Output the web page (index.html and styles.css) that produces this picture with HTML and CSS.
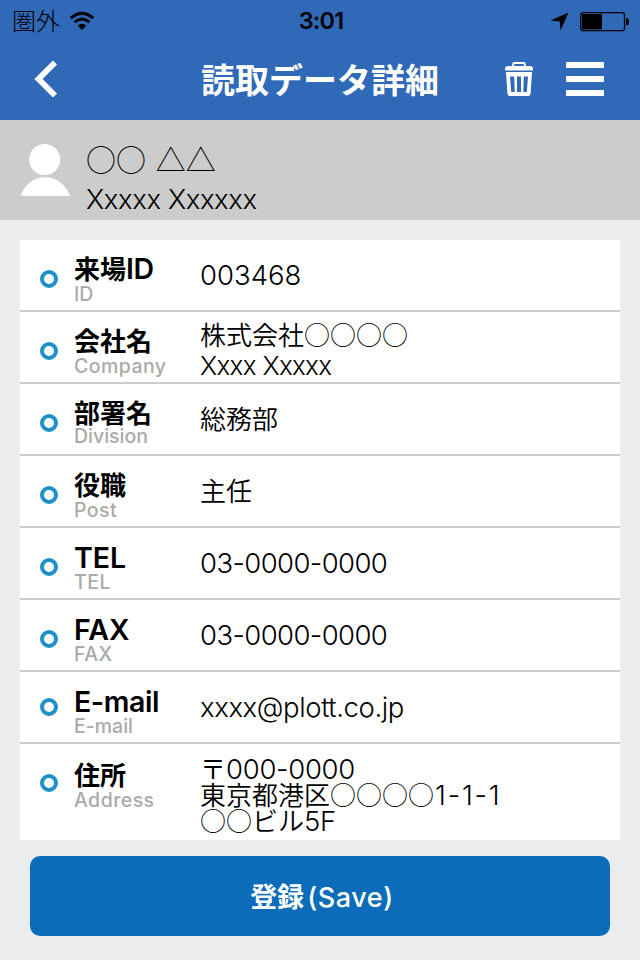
FILE: index.html
```html
<!DOCTYPE html>
<html lang="ja">
<head>
    <meta charset="UTF-8">
    <meta name="viewport" content="width=device-width, initial-scale=1.0">
    <title>読取データ詳細</title>
    <link rel="stylesheet" href="styles.css">
</head>
<body>
    <header class="header">
        <div class="status-bar">
            <div class="status-left">
                <span class="carrier">圏外</span>
                <svg class="wifi" width="26" height="20" viewBox="0 0 26 20">
                    <path d="M1.8 7.2Q13 -2.4 24.2 7.2" fill="none" stroke="#000" stroke-width="3"/>
                    <path d="M5.6 11.2Q13 4.8 20.4 11.2" fill="none" stroke="#000" stroke-width="3"/>
                    <path d="M8.7 14.5Q13 10.9 17.3 14.5L13 19z"/>
                </svg>
            </div>
            <span class="time">3:01</span>
            <div class="status-right">
                <svg width="19" height="19" viewBox="0 0 19 19">
                    <path d="M0.5 8.5L18.5 0.5L10.5 18.5L9.8 9.4z"/>
                </svg>
                <svg class="battery" width="50" height="20" viewBox="0 0 50 20">
                    <rect x="0.7" y="0.7" width="43.8" height="18" rx="2.5" fill="none" stroke="#000" stroke-width="1.3"/>
                    <rect x="2" y="2" width="20" height="15.3"/>
                    <path d="M46 6h1.5q1.5 1.5 1.5 3.7t-1.5 3.5H46z"/>
                </svg>
            </div>
        </div>
        <div class="nav-bar">
            <a class="back" href="#">
                <svg width="24" height="38" viewBox="0 0 24 38">
                    <path d="M21 2.5L4.500 19L21 35.5" fill="none" stroke="#fff" stroke-width="5.8"/>
                </svg>
            </a>
            <h1 class="page-title">読取データ詳細</h1>
            <div class="nav-actions">
                <svg width="28" height="34" viewBox="0 0 28 34" fill="#fff">
                    <path d="M8.2 5V2.2Q8.2 1 9.4 1H18.6Q19.8 1 19.8 2.2V5" fill="none" stroke="#fff" stroke-width="2"/>
                    <path d="M0 8.5V7Q0 4 3 4H25Q28 4 28 7V8.5z"/>
                    <path fill-rule="evenodd" d="M1 10H27L25.6 31.5Q25.4 34 23 34H5Q2.6 34 2.4 31.5zM5 14.5L6.2 30H9.7L9.2 14.5zM12 14.5V30H16V14.5zM18.8 14.5L18.300 30H21.800L23 14.5z"/>
                </svg>
                <span class="menu-icon"><i></i><i></i><i></i></span>
            </div>
        </div>
    </header>

    <section class="profile">
        <svg class="avatar" width="50" height="52" viewBox="0 0 50 52" fill="#fff">
            <circle cx="24.7" cy="15.5" r="15.5"/>
            <path d="M0.5 52C4.5 41 13 33.3 25 33.3S46 41 50 52z"/>
        </svg>
        <div class="profile-name">
            <p class="name-ja">○○ △△</p>
            <p class="name-en">Xxxxx Xxxxxx</p>
        </div>
    </section>

    <main class="container">
        <ul class="detail-list">
            <li class="row">
                <span class="ring"></span>
                <div class="label"><b>来場<span class="latin">ID</span></b><small>ID</small></div>
                <div class="value latin">003468</div>
            </li>
            <li class="row row-company">
                <span class="ring"></span>
                <div class="label"><b>会社名</b><small class="wide">Company</small></div>
                <div class="value"><p>株式会社<span class="shape">○○○○</span></p><p class="company-en">Xxxx Xxxxx</p></div>
            </li>
            <li class="row row-division">
                <span class="ring"></span>
                <div class="label"><b>部署名</b><small>Division</small></div>
                <div class="value">総務部</div>
            </li>
            <li class="row">
                <span class="ring"></span>
                <div class="label"><b>役職</b><small class="wide">Post</small></div>
                <div class="value">主任</div>
            </li>
            <li class="row">
                <span class="ring"></span>
                <div class="label"><b class="latin">TEL</b><small class="wide">TEL</small></div>
                <div class="value latin phone">03-0000-0000</div>
            </li>
            <li class="row">
                <span class="ring"></span>
                <div class="label"><b class="latin">FAX</b><small class="wide">FAX</small></div>
                <div class="value latin phone">03-0000-0000</div>
            </li>
            <li class="row row-mail">
                <span class="ring"></span>
                <div class="label"><b class="latin">E-mail</b><small>E-mail</small></div>
                <div class="value latin mail">xxxx@plott.co.jp</div>
            </li>
            <li class="row row-address">
                <span class="ring"></span>
                <div class="label"><b>住所</b><small class="wide">Address</small></div>
                <div class="value">
                    <p>〒<span class="latin">000-0000</span></p>
                    <p>東京都港区<span class="shape">○○○○</span><span class="latin block-no">1-1-1</span></p>
                    <p><span class="shape">○○</span>ビル<span class="latin">5F</span></p>
                </div>
            </li>
        </ul>
        <button class="save" type="button">登録<span class="save-en">(Save)</span></button>
    </main>
</body>
</html>
```
FILE: styles.css
```css
* {
    box-sizing: border-box;
}
body {
    margin: 0;
    background-color: #ececec;
    color: #000;
    font-family: "Noto Sans CJK JP", sans-serif;
}
p, h1, ul {
    margin: 0;
    padding: 0;
}
svg {
    display: block;
}

/* header */
.header {
    height: 120px;
    background-color: #2f69b8;
}
.status-bar {
    display: grid;
    grid-template-columns: 1fr auto 1fr;
    height: 40px;
    padding: 0 10px 0 12px;
    align-items: center;
}
.status-left, .status-right {
    display: flex;
    align-items: center;
}
.status-left {
    gap: 9px;
}
.status-right {
    justify-content: flex-end;
    gap: 11px;
}
.battery {
    margin-top: 1px;
}
.carrier {
    height: 40px;
    font-size: 24px;
    font-weight: 300;
    line-height: 38px;
}
.time {
    font-family: Inter, sans-serif;
    font-size: 23.5px;
    font-weight: 600;
    letter-spacing: -0.8px;
    line-height: 42px;
}
.nav-bar {
    display: grid;
    grid-template-columns: 1fr auto 1fr;
    height: 80px;
    padding: 0 36px 2px;
    align-items: center;
}
.back {
    margin-left: -2px;
}
.page-title {
    color: #fff;
    font-size: 34px;
    font-weight: bold;
    line-height: 78px;
}
.nav-actions {
    display: flex;
    justify-content: flex-end;
    align-items: center;
    gap: 33px;
}
.menu-icon {
    display: flex;
    flex-direction: column;
    gap: 8px;
    width: 38px;
}
.menu-icon i {
    height: 6px;
    background-color: #fff;
}

/* visitor */
.profile {
    display: flex;
    gap: 16px;
    height: 100px;
    padding: 24px 20px 0;
    background-color: #ccc;
}
.profile-name {
    margin-top: -5px;
}
.name-ja {
    font-size: 30px;
    font-weight: 200;
    line-height: 38px;
    word-spacing: 3px;
}
.name-en {
    padding-top: 2px;
    font-family: Inter, sans-serif;
    font-size: 27.5px;
    font-weight: 350;
    letter-spacing: -0.4px;
    line-height: 41px;
}

/* details */
.container {
    padding: 20px 20px 24px;
}
.detail-list {
    list-style: none;
    background-color: #fff;
}
.row {
    display: grid;
    grid-template-columns: 18px 110px 1fr;
    column-gap: 16px;
    height: 72px;
    padding-left: 20px;
    border-bottom: 2px solid #ccc;
}
.row-address {
    height: 96px;
    border-bottom: none;
}
.ring {
    width: 18px;
    height: 18px;
    margin-top: 30px;
    border: 4px solid #2090c8;
    border-radius: 50%;
}
.row-mail .ring {
    margin-top: 26px;
}
.label {
    padding-top: 13px;
    white-space: nowrap;
}
.label b {
    display: block;
    height: 30px;
    font-size: 26px;
    font-weight: bold;
    line-height: 30px;
}
.label small {
    display: block;
    color: #aaa;
    font-family: Inter, sans-serif;
    font-size: 19.5px;
    font-weight: 500;
    line-height: 23px;
}
.label .wide {
    letter-spacing: 0.45px;
}
.row-division small {
    margin-top: -2px;
}
.row-address .label {
    padding-top: 15px;
}
.value {
    padding-top: 14px;
    font-size: 26px;
    font-weight: 350;
    line-height: 40px;
    white-space: nowrap;
}
.latin {
    font-family: Inter, sans-serif;
    font-weight: 350;
}
.value.latin {
    padding-top: 15px;
    font-size: 27.5px;
}
.value .latin {
    font-size: 27.5px;
    line-height: 1;
    letter-spacing: -0.3px;
}
.value .block-no {
    margin-left: 1px;
    letter-spacing: 1.8px;
}
.value.phone {
    letter-spacing: -0.6px;
}
.value.mail {
    letter-spacing: -0.4px;
}
.label b .latin, .label b.latin {
    font-size: 28.5px;
    font-weight: 600;
}
.label b .latin {
    line-height: 1;
    letter-spacing: -0.5px;
}
.label b.latin {
    line-height: 34px;
}
.row-mail .label b.latin {
    letter-spacing: -0.4px;
}
.shape {
    font-weight: 200;
}
.row-company .value {
    padding-top: 7px;
    line-height: 30px;
}
.company-en {
    padding-top: 2px;
    font-family: Inter, sans-serif;
    letter-spacing: -0.7px;
}
.row-address .value {
    padding-top: 11px;
    line-height: 26px;
}
.row-address .value p {
    height: 26px;
}

/* save */
.save {
    display: block;
    width: 580px;
    height: 80px;
    margin: 16px auto 0;
    padding: 0 0 2px 4px;
    border: none;
    border-radius: 10px;
    background-color: #0c6cb9;
    color: #fff;
    font-family: "Noto Sans CJK JP", sans-serif;
    font-size: 27px;
    font-weight: bold;
}
.save-en {
    margin-left: 3px;
    font-family: Inter, sans-serif;
    font-weight: 500;
    letter-spacing: 0.6px;
}
```
